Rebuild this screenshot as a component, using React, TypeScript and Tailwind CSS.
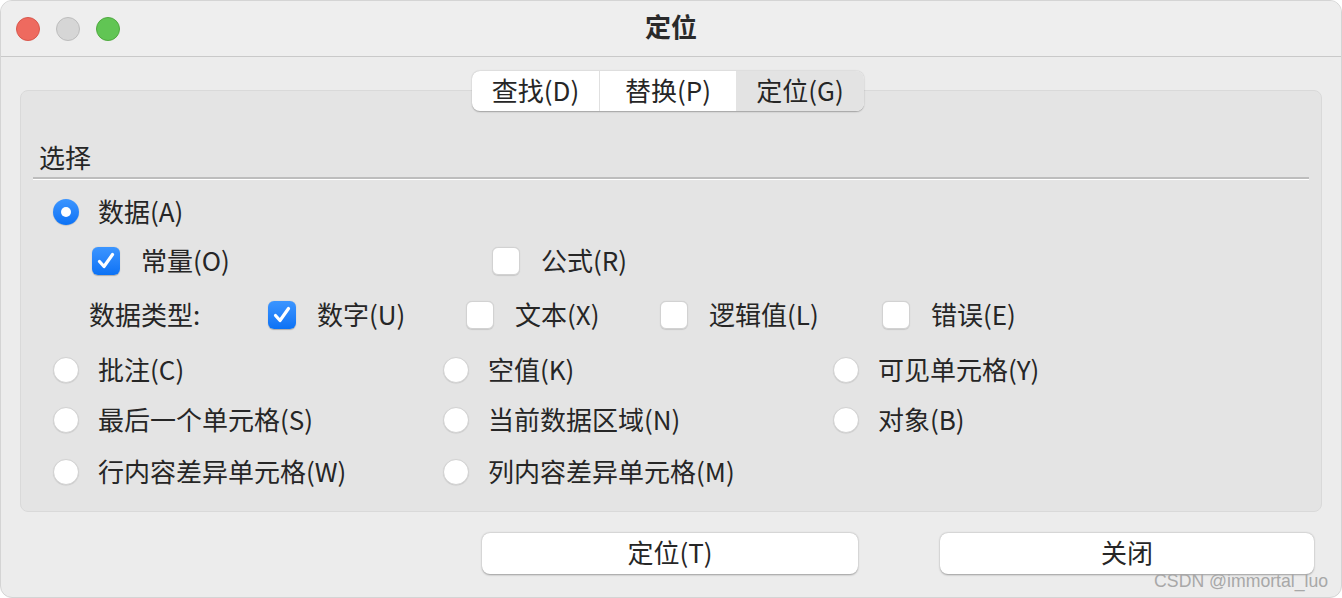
import React from "react";

const font = { fontFamily: '"Noto Sans CJK SC", "Noto Sans", sans-serif' };

const Radio: React.FC<{ checked?: boolean }> = ({ checked }) =>
  checked ? (
    <span className="flex h-[26px] w-[26px] shrink-0 items-center justify-center rounded-full bg-gradient-to-b from-[#3b95ff] to-[#0a72f5] shadow-[0_0.5px_1px_rgba(0,0,0,0.25)]">
      <span className="h-[10px] w-[10px] rounded-full bg-white" />
    </span>
  ) : (
    <span className="h-[26px] w-[26px] shrink-0 rounded-full border border-[#d2d2d2] bg-white shadow-[0_0.5px_1px_rgba(0,0,0,0.12)]" />
  );

const Check: React.FC<{ checked?: boolean }> = ({ checked }) =>
  checked ? (
    <span className="flex h-[28px] w-[28px] shrink-0 items-center justify-center rounded-[6px] bg-gradient-to-b from-[#3b95ff] to-[#0a72f5] shadow-[0_0.5px_1px_rgba(0,0,0,0.25)]">
      <svg width="22" height="22" viewBox="0 0 22 22" fill="none">
        <path d="M4.5 11.5 L9 16.5 L17.5 4.5" stroke="white" strokeWidth="3.2" strokeLinecap="round" strokeLinejoin="round" />
      </svg>
    </span>
  ) : (
    <span className="h-[28px] w-[28px] shrink-0 rounded-[6px] border border-[#d2d2d2] bg-white shadow-[0_0.5px_1px_rgba(0,0,0,0.12)]" />
  );

const RadioItem: React.FC<{ label: string; checked?: boolean }> = ({ label, checked }) => (
  <div className="flex items-center gap-[19px]">
    <Radio checked={checked} />
    <span className="pb-[3px]">{label}</span>
  </div>
);

const CheckItem: React.FC<{ label: string; checked?: boolean; className?: string }> = ({ label, checked, className }) => (
  <div className={"flex items-center gap-[21px] " + (className ?? "")}>
    <Check checked={checked} />
    <span className="pb-[3px]">{label}</span>
  </div>
);

export default function App() {
  return (
    <div className="h-[598px] w-[1342px] bg-white" style={font}>
      <div className="flex h-full w-full flex-col overflow-hidden rounded-[12px] border border-[#d4d4d4] bg-[#ececec] text-[26px] leading-none text-[#262626]">
        {/* title bar */}
        <div className="grid h-[56px] shrink-0 grid-cols-[1fr_auto_1fr] items-center border-b border-[#c9c9c9] bg-[#eeeeee]">
          <div className="flex items-center gap-[16px] pl-[15px]">
            <span className="h-[24px] w-[24px] rounded-full border border-[#d9574c] bg-[#ee6a5f]" />
            <span className="h-[24px] w-[24px] rounded-full border border-[#bdbdbd] bg-[#d6d6d6]" />
            <span className="h-[24px] w-[24px] rounded-full border border-[#4fa93f] bg-[#61c554]" />
          </div>
          <div className="pb-[5px] font-bold text-[#2a2a2a]">定位</div>
          <div />
        </div>

        {/* body */}
        <div className="flex flex-col px-[19px] pt-[14px]">
          {/* tabs */}
          <div className="relative z-10 -mb-[21px] flex justify-center pr-[6px]">
            <div className="flex h-[40px] overflow-hidden rounded-[8px] bg-white shadow-[0_0.5px_1.5px_rgba(0,0,0,0.3)]">
              <div className="flex w-[128px] items-center justify-center border-r border-[#e0e0e0] pb-[3px]">查找(D)</div>
              <div className="flex w-[136px] items-center justify-center pb-[3px]">替换(P)</div>
              <div className="flex w-[128px] items-center justify-center bg-[#e3e3e3] pb-[3px]">定位(G)</div>
            </div>
          </div>

          {/* panel */}
          <div className="flex h-[422px] flex-col rounded-[8px] border border-[#d9d9d9] bg-[#e4e4e4] pl-[12px] pr-[12px]">
            <div className="mt-[52px] flex h-[30px] items-center pb-[3px] pl-[6px]">选择</div>
            <div className="mt-[4px] h-[2px] bg-[#bdbdbd]" />
            <div className="h-px bg-white" />

            <div className="mt-[12px] flex h-[40px] items-center pl-[20px]">
              <RadioItem label="数据(A)" checked />
            </div>

            <div className="mt-[9px] flex h-[40px] items-center pl-[59px]">
              <CheckItem label="常量(O)" checked className="w-[400px]" />
              <CheckItem label="公式(R)" />
            </div>

            <div className="mt-[14px] flex h-[40px] items-center pl-[56px]">
              <span className="w-[179px] pb-[3px]">数据类型:</span>
              <CheckItem label="数字(U)" checked className="w-[198px]" />
              <CheckItem label="文本(X)" className="w-[194px]" />
              <CheckItem label="逻辑值(L)" className="w-[222px]" />
              <CheckItem label="错误(E)" />
            </div>

            <div className="grid grid-cols-[390px_390px_auto] pl-[20px]">
              <div className="mt-[15px] flex h-[40px] items-center"><RadioItem label="批注(C)" /></div>
              <div className="mt-[15px] flex h-[40px] items-center"><RadioItem label="空值(K)" /></div>
              <div className="mt-[15px] flex h-[40px] items-center"><RadioItem label="可见单元格(Y)" /></div>
              <div className="mt-[10px] flex h-[40px] items-center"><RadioItem label="最后一个单元格(S)" /></div>
              <div className="mt-[10px] flex h-[40px] items-center"><RadioItem label="当前数据区域(N)" /></div>
              <div className="mt-[10px] flex h-[40px] items-center"><RadioItem label="对象(B)" /></div>
              <div className="mt-[12px] flex h-[40px] items-center"><RadioItem label="行内容差异单元格(W)" /></div>
              <div className="mt-[12px] flex h-[40px] items-center"><RadioItem label="列内容差异单元格(M)" /></div>
            </div>
          </div>

          {/* buttons */}
          <div className="relative mt-[21px] flex justify-end gap-[82px] pr-[8px]">
            <button className="flex h-[41px] w-[376px] items-center justify-center rounded-[8px] bg-white pb-[4px] shadow-[0_0.5px_2px_rgba(0,0,0,0.35)]">
              定位(T)
            </button>
            <button className="flex h-[41px] w-[374px] items-center justify-center rounded-[8px] bg-white pb-[4px] shadow-[0_0.5px_2px_rgba(0,0,0,0.35)]">
              关闭
            </button>
            <span
              className="absolute right-[-6px] top-[38px] text-[19px] text-[#a8a8a8]"
              style={{ fontFamily: '"Liberation Sans", sans-serif', transform: "scaleX(0.93)", transformOrigin: "right" }}
            >
              CSDN @immortal_luo
            </span>
          </div>
        </div>
      </div>
    </div>
  );
}
